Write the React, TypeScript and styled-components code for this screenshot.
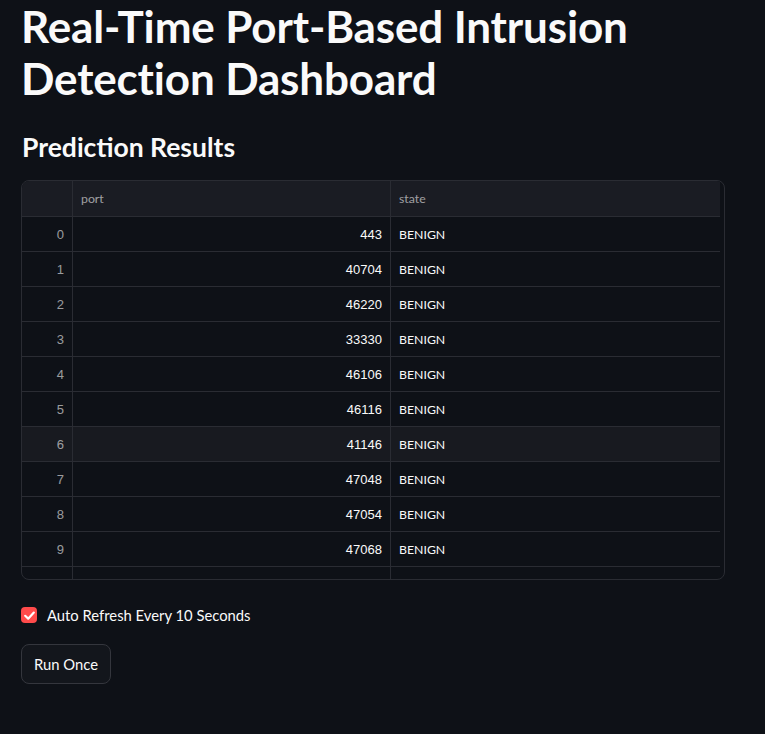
import React from 'react'
import styled, { createGlobalStyle } from 'styled-components'

const GlobalStyle = createGlobalStyle`
    html, body {
        margin: 0;
        padding: 0;
        background: #0e1117;
        color: #fafafa;
        font-family: Lato, "Noto Sans", sans-serif;
    }
`

const Main = styled.main`
    padding: 0 21px 40px 21px;
    width: 704px;
`

const Title = styled.h1`
    margin: 0;
    padding-top: 0;
    font-size: 44px;
    font-weight: 700;
    line-height: 52px;
    letter-spacing: -0.15px;
`

const Subtitle = styled.h3`
    margin: 23px 0 0 1px;
    font-size: 26.5px;
    font-weight: 700;
    line-height: 40px;
`

const TableFrame = styled.div`
    margin-top: 13px;
    height: 398px;
    border: 1px solid #2a2c33;
    border-radius: 8px;
    overflow: hidden;
    padding-right: 4px;
`

const Row = styled.div<{ $head?: boolean; $hover?: boolean }>`
    display: grid;
    grid-template-columns: 50px 318px 1fr;
    height: ${p => (p.$head ? '35px' : '34px')};
    border-bottom: 1px solid #2a2c33;
    background: ${p => (p.$head ? '#1a1c23' : p.$hover ? '#181a20' : 'transparent')};
`

const Cell = styled.div<{ $align?: 'left' | 'right'; $mono?: boolean; $muted?: boolean }>`
    display: flex;
    align-items: center;
    justify-content: ${p => (p.$align === 'right' ? 'flex-end' : 'flex-start')};
    padding: 0 8px;
    font-size: ${p => (p.$mono ? '13px' : '12.3px')};
    font-family: ${p => (p.$mono ? '"Liberation Sans", Arial, sans-serif' : 'Lato, "Noto Sans", sans-serif')};
    color: ${p => (p.$muted ? 'rgba(250, 250, 250, 0.6)' : '#fafafa')};
    & + & {
        border-left: 1px solid #2a2c33;
    }
`

const CheckRow = styled.label`
    display: flex;
    align-items: center;
    gap: 10px;
    margin-top: 26px;
    font-size: 14.8px;
`

const Box = styled.span`
    width: 16px;
    height: 16px;
    border-radius: 4px;
    background: #ff4b4b;
    display: flex;
    align-items: center;
    justify-content: center;
`

const Button = styled.button`
    margin-top: 20px;
    height: 40px;
    padding: 0 12px;
    background: #13161c;
    color: #fafafa;
    border: 1px solid #34363d;
    border-radius: 8px;
    font-family: Lato, "Noto Sans", sans-serif;
    font-size: 14.8px;
`

const rows = [
    { port: 443 },
    { port: 40704 },
    { port: 46220 },
    { port: 33330 },
    { port: 46106 },
    { port: 46116 },
    { port: 41146 },
    { port: 47048 },
    { port: 47054 },
    { port: 47068 },
]

const App = () => {
  return (
    <Main>
        <GlobalStyle />
        <Title>Real-Time Port-Based Intrusion Detection Dashboard</Title>
        <Subtitle>Prediction Results</Subtitle>

        <TableFrame>
            <Row $head>
                <Cell />
                <Cell $muted>port</Cell>
                <Cell $muted>state</Cell>
            </Row>
            {rows.map((r, i) => (
                <Row key={i} $hover={i === 6}>
                    <Cell $align='right' $mono $muted>{i}</Cell>
                    <Cell $align='right' $mono>{r.port}</Cell>
                    <Cell>BENIGN</Cell>
                </Row>
            ))}
            <Row>
                <Cell />
                <Cell />
                <Cell />
            </Row>
        </TableFrame>

        <CheckRow>
            <Box>
                <svg width="13" height="13" viewBox="0 0 12 12">
                    <path d="M2 6.3 L4.8 8.9 L10 3.3" fill="none" stroke="#fff" strokeWidth="2" strokeLinecap="round" strokeLinejoin="round" />
                </svg>
            </Box>
            Auto Refresh Every 10 Seconds
        </CheckRow>

        <Button>Run Once</Button>
    </Main>
  )
}

export default App
